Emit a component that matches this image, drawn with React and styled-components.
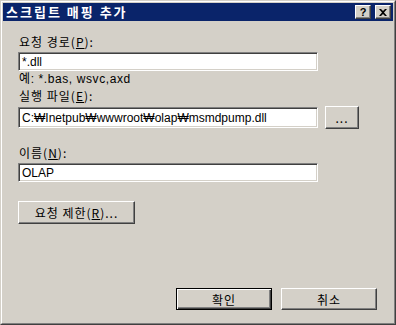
import React from "react";
import styled, { createGlobalStyle } from "styled-components";

const Global = createGlobalStyle`
  html, body { margin: 0; padding: 0; background: #d4d0c8; }
  body { font-family: "Liberation Sans", "Noto Sans CJK KR", sans-serif; font-size: 12px; color: #000; }
`;

const Window = styled.div`
  box-sizing: border-box;
  width: 396px;
  height: 325px;
  background: #d4d0c8;
  border-style: solid;
  border-width: 1px;
  border-color: #d4d0c8 #404040 #404040 #d4d0c8;
  display: flex;
  flex-direction: column;
`;

const Frame = styled.div`
  flex: 1;
  display: flex;
  flex-direction: column;
  border-style: solid;
  border-width: 1px;
  border-color: #ffffff #808080 #808080 #ffffff;
  padding: 1px;
`;

const TitleBar = styled.div`
  height: 18px;
  background: #0a246a;
  display: flex;
  align-items: center;
  padding: 0 2px 0 3px;
  gap: 2px;
`;

const Title = styled.div`
  flex: 1;
  color: #fff;
  font-family: "Noto Sans CJK KR", sans-serif;
  font-weight: 700;
  font-size: 13px;
  line-height: 18px;
  letter-spacing: 2px;
`;

const CapButton = styled.div`
  box-sizing: border-box;
  width: 16px;
  height: 14px;
  background: #d4d0c8;
  border-style: solid;
  border-width: 1px;
  border-color: #ffffff #404040 #404040 #ffffff;
  box-shadow: inset -1px -1px 0 #808080;
  display: flex;
  align-items: center;
  justify-content: center;
  font-family: "Liberation Sans", sans-serif;
  font-weight: 700;
  font-size: 11px;
  line-height: 1;
  margin-left: ${(p) => (p.$gap ? "2px" : "0")};
`;

const Body = styled.div`
  flex: 1;
  display: flex;
  flex-direction: column;
  padding: 14px 16px 12px 15px;
`;

const Label = styled.div`
  font-family: "Noto Sans CJK KR", sans-serif;
  font-size: 12px;
  line-height: 14px;
  letter-spacing: 1px;
  margin: ${(p) => p.$m || "0"};
`;

const Hint = styled(Label)`
  font-family: "Liberation Sans", "Noto Sans CJK KR", sans-serif;
  letter-spacing: 0.6px;
`;

const Underline = styled.span`
  text-decoration: underline;
`;

const FieldRow = styled.div`
  display: flex;
  align-items: center;
  gap: 7px;
  margin: ${(p) => p.$m || "0"};
`;

const Input = styled.div`
  box-sizing: border-box;
  width: 300px;
  height: ${(p) => p.$h || 19}px;
  background: #fff;
  border-style: solid;
  border-width: 1px;
  border-color: #808080 #ffffff #ffffff #808080;
  box-shadow: inset 1px 1px 0 #404040, inset -1px -1px 0 #d4d0c8;
  padding: 0 3px;
  display: flex;
  align-items: center;
  font-family: "Liberation Sans", "Noto Sans CJK KR", sans-serif;
  font-size: 12px;
  white-space: nowrap;
  overflow: hidden;
`;

const Button = styled.div`
  box-sizing: border-box;
  width: ${(p) => p.$w}px;
  height: ${(p) => p.$h || 22}px;
  background: #d4d0c8;
  border-style: solid;
  border-width: 1px;
  border-color: ${(p) =>
    p.$default ? "#000000" : "#ffffff #404040 #404040 #ffffff"};
  box-shadow: ${(p) =>
    p.$default
      ? "inset 1px 1px 0 #ffffff, inset -1px -1px 0 #404040, inset -2px -2px 0 #808080"
      : "inset -1px -1px 0 #808080"};
  display: flex;
  align-items: center;
  justify-content: center;
  font-family: "Noto Sans CJK KR", sans-serif;
  font-size: 12px;
  letter-spacing: 1px;
  margin: ${(p) => p.$m || "0"};
`;

const Footer = styled.div`
  margin-top: auto;
  display: flex;
  justify-content: flex-end;
  gap: 9px;
  padding-right: 0;
`;

export default function App() {
  return (
    <>
      <Global />
      <Window>
        <Frame>
          <TitleBar>
            <Title>스크립트 매핑 추가</Title>
            <CapButton>?</CapButton>
            <CapButton $gap>
              <svg width="8" height="7" viewBox="0 0 8 7">
                <path d="M0 0h2l2 2 2-2h2L5 3.5 8 7H6L4 5 2 7H0l3-3.5z" fill="#000" />
              </svg>
            </CapButton>
          </TitleBar>
          <Body>
            <Label $m="0 0 0 1px">
              요청 경로(<Underline>P</Underline>):
            </Label>
            <FieldRow $m="3px 0 0 0">
              <Input>*.dll</Input>
            </FieldRow>
            <Hint $m="1px 0 0 1px">예: *.bas, wsvc,axd</Hint>
            <Label $m="3px 0 0 1px">
              실행 파일(<Underline>E</Underline>):
            </Label>
            <FieldRow $m="3px 0 0 0">
              <Input $h={21}>C:₩Inetpub₩wwwroot₩olap₩msmdpump.dll</Input>
              <Button $w={34} $h={23}>...</Button>
            </FieldRow>
            <Label $m="17px 0 0 1px">
              이름(<Underline>N</Underline>):
            </Label>
            <FieldRow $m="3px 0 0 0">
              <Input>OLAP</Input>
            </FieldRow>
            <Button $w={117} $h={23} $m="19px 0 0 0">
              요청 제한(<Underline>R</Underline>)...
            </Button>
            <Footer>
              <Button $w={96} $default>확인</Button>
              <Button $w={96}>취소</Button>
            </Footer>
          </Body>
        </Frame>
      </Window>
    </>
  );
}
